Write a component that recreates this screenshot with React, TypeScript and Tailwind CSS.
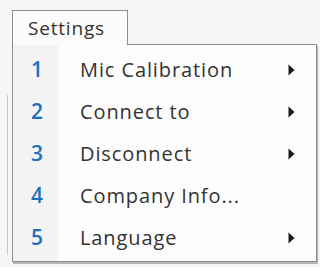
import React from 'react';

const items = [
  { n: '1', label: 'Mic Calibration', sub: true },
  { n: '2', label: 'Connect to', sub: true },
  { n: '3', label: 'Disconnect', sub: true },
  { n: '4', label: 'Company Info...', sub: false },
  { n: '5', label: 'Language', sub: true },
];

function Arrow() {
  return (
    <svg width="7" height="12" viewBox="0 0 7 12" className="text-[#1a1a1a]">
      <path d="M0.5 0.5 L6.5 6 L0.5 11.5 Z" fill="currentColor" />
    </svg>
  );
}

export default function App() {
  return (
    <div className="w-[320px] h-[267px] bg-[#f6f6f6] relative overflow-hidden" style={{ fontFamily: '"Open Sans", "Noto Sans", sans-serif' }}>
      {/* faint line on the left edge */}
      <div className="absolute left-[7px] top-[95px] w-px h-[160px] bg-[#c8c8c8]"></div>

      <div className="pl-[12px] pt-[10px] w-[317px]">
        {/* tab */}
        <div className="relative z-10 w-[116px] h-[35px] -mb-px bg-[#fbfbfb] border-l border-t border-r border-[#8c8c8c] flex items-center pl-[15px]">
          <span className="text-[19px] tracking-[0.8px] text-[#333] leading-none">Settings</span>
        </div>

        {/* menu */}
        <div className="border border-[#8c8c8c] bg-[#fdfdfd] shadow-[1px_2px_0_#b5b5b5] flex h-[218px]">
          <div className="w-[45px] bg-[#f4f4f4] flex flex-col pt-[4px]">
            {items.map((it) => (
              <div key={it.n} className="h-[42px] flex items-center justify-center pl-[3px] text-[21px] font-semibold text-[#1c6fbd]">
                {it.n}
              </div>
            ))}
          </div>
          <div className="flex-1 flex flex-col pt-[4px]">
            {items.map((it) => (
              <div key={it.n} className="h-[42px] flex items-center pl-[22px] pr-[21px]">
                <span className="flex-1 text-[20px] tracking-[0.9px] text-[#333]">{it.label}</span>
                {it.sub && <Arrow />}
              </div>
            ))}
          </div>
        </div>
      </div>
    </div>
  );
}
